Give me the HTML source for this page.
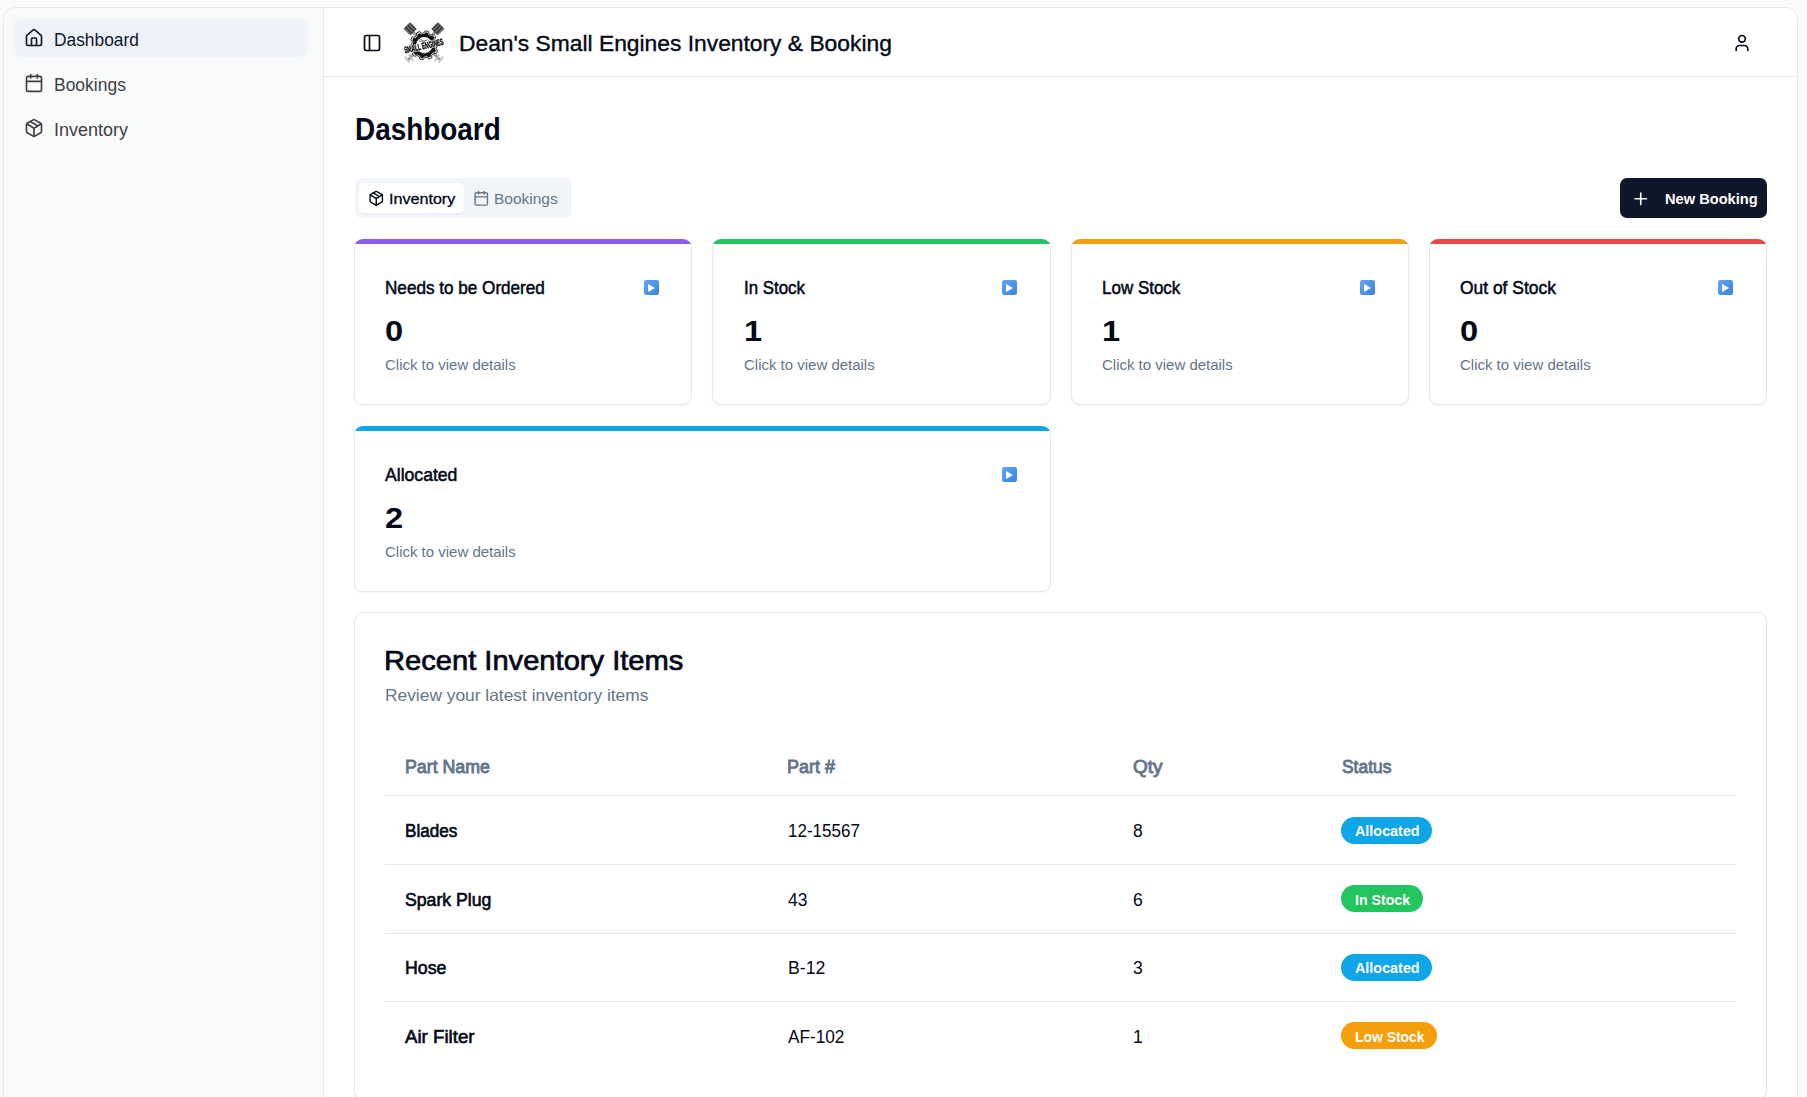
<!DOCTYPE html>
<html><head><meta charset="utf-8"><style>
*{box-sizing:border-box;margin:0;padding:0}
html,body{width:1807px;height:1097px;overflow:hidden;background:#fcf9f9;font-family:"Liberation Sans", sans-serif}
.app{position:absolute;left:3px;top:7px;width:1795px;height:1110px;border:1px solid #e9e7e7;border-radius:12px;background:#f9fafa;overflow:hidden}
.main{position:absolute;left:319px;top:-1px;width:1476px;height:1112px;background:#fff;border-left:1px solid #e8e8e8}
.hdr{position:absolute;left:0;top:0;width:100%;height:70px;border-bottom:1px solid #e5e7eb}
.t{position:absolute;white-space:pre;line-height:1;transform-origin:0 50%}
.ic{position:absolute}
.ic svg{width:100%;height:100%;display:block}
.active{position:absolute;left:15px;top:19px;width:292px;height:38px;border-radius:7px;background:#eef2f8;box-shadow:0 0 4px 2px rgba(238,242,248,0.6)}
.tabs{position:absolute;left:355px;top:178px;width:217px;height:40px;border-radius:7px;background:#f1f5f9}
.tab{position:absolute;left:359px;top:183px;width:105px;height:30px;border-radius:5px;background:#fff;box-shadow:0 1px 2px rgba(0,0,0,0.05)}
.btn{position:absolute;left:1620px;top:178px;width:147px;height:40px;border-radius:7px;background:#0f172a}
.card{position:absolute;background:#fff;border:1px solid #e5e7eb;border-radius:9px;box-shadow:0 1px 2px rgba(0,0,0,0.05)}
.card i{position:absolute;left:-1px;right:-1px;top:-1px;height:5px;display:block;overflow:hidden}
.card b{display:block;height:20px;border-radius:9px}
.tcard{position:absolute;left:354px;top:612px;width:1413px;height:488px;background:#fff;border:1px solid #e5e7eb;border-radius:9px;box-shadow:0 1px 2px rgba(0,0,0,0.05)}
.hl{position:absolute;left:385px;width:1351px;height:1px;background:#e5e7eb}
.badge{position:absolute;height:27px;border-radius:14px}
.play{position:absolute;width:15px;height:15px}
.play svg{display:block;width:15px;height:15px}
.logo{position:absolute;left:400px;top:20px;width:48px;height:46px}
.logo svg{display:block;width:100%;height:100%}
.logo{will-change:transform}
</style></head><body>
<div class="app"><div class="main"><div class="hdr"></div></div></div>
<div class="active"></div>
<div class="ic" style="left:24px;top:28.0px;width:20px;height:20px;color:#18181b"><svg viewBox="0 0 24 24" fill="none" stroke="currentColor" stroke-width="2" stroke-linecap="round" stroke-linejoin="round"><path d="M15 21v-8a1 1 0 0 0-1-1h-4a1 1 0 0 0-1 1v8"/><path d="M3 10a2 2 0 0 1 .709-1.528l7-5.999a2 2 0 0 1 2.582 0l7 5.999A2 2 0 0 1 21 10v9a2 2 0 0 1-2 2H5a2 2 0 0 1-2-2z"/></svg></div>
<div class="ic" style="left:24px;top:72.9px;width:20px;height:20px;color:#3f3f46"><svg viewBox="0 0 24 24" fill="none" stroke="currentColor" stroke-width="2" stroke-linecap="round" stroke-linejoin="round"><path d="M8 2v4"/><path d="M16 2v4"/><rect width="18" height="18" x="3" y="4" rx="2"/><path d="M3 10h18"/></svg></div>
<div class="ic" style="left:24px;top:118px;width:20px;height:20px;color:#3f3f46"><svg viewBox="0 0 24 24" fill="none" stroke="currentColor" stroke-width="2" stroke-linecap="round" stroke-linejoin="round"><path d="M11 21.73a2 2 0 0 0 2 0l7-4A2 2 0 0 0 21 16V8a2 2 0 0 0-1-1.73l-7-4a2 2 0 0 0-2 0l-7 4A2 2 0 0 0 3 8v8a2 2 0 0 0 1 1.73z"/><path d="M12 22V12"/><path d="m3.3 7 7.703 4.734a2 2 0 0 0 1.994 0L20.7 7"/><path d="m7.5 4.27 9 5.15"/></svg></div>
<div class="ic" style="left:362.3px;top:33px;width:20px;height:20px;color:#020817"><svg viewBox="0 0 24 24" fill="none" stroke="currentColor" stroke-width="2" stroke-linecap="round" stroke-linejoin="round"><rect width="18" height="18" x="3" y="3" rx="2"/><path d="M9 3v18"/></svg></div>
<div class="logo"><svg viewBox="400 20 48 46" width="48" height="46">
<defs><pattern id="stp" width="3" height="3" patternUnits="userSpaceOnUse"><rect width="3" height="1.9" fill="#2a2a2a"/><rect y="1.9" width="3" height="1.1" fill="#8a8a8a"/></pattern></defs>
<g stroke-linecap="round">
<line x1="410" y1="29" x2="439" y2="59" stroke="#9a9a9a" stroke-width="2.8"/>
<line x1="438" y1="29" x2="409" y2="59" stroke="#9a9a9a" stroke-width="2.8"/>
<path d="M405 57 l4 5 M409 55 l4 6" stroke="#bdbdbd" stroke-width="1.5"/>
<path d="M443 57 l-4 5 M439 55 l-4 6" stroke="#bdbdbd" stroke-width="1.5"/>
</g>
<g transform="rotate(45 410 29)"><rect x="405.5" y="24.5" width="9" height="8.5" rx="1" fill="url(#stp)" stroke="#333" stroke-width="0.8"/></g>
<g transform="rotate(-45 438 29)"><rect x="433.5" y="24.5" width="9" height="8.5" rx="1" fill="url(#stp)" stroke="#333" stroke-width="0.8"/></g>
<path d="M423.89 32.90 L425.30 30.74 L428.54 31.36 L429.05 33.89 L431.23 35.09 L433.65 34.17 L435.90 36.57 L434.83 38.92 L435.89 41.17 L438.39 41.85 L438.80 45.12 L436.55 46.39 L436.09 48.83 L437.71 50.84 L436.12 53.73 L433.55 53.44 L431.74 55.15 L431.87 57.72 L428.89 59.13 L426.98 57.38 L424.51 57.70 L423.10 59.86 L419.86 59.24 L419.35 56.71 L417.17 55.51 L414.75 56.43 L412.50 54.03 L413.57 51.68 L412.51 49.43 L410.01 48.75 L409.60 45.48 L411.85 44.21 L412.31 41.77 L410.69 39.76 L412.28 36.87 L414.85 37.16 L416.66 35.45 L416.53 32.88 L419.51 31.47 L421.42 33.22Z" fill="#d8d8d8" stroke="#2a2a2a" stroke-width="0.9" stroke-linejoin="round"/>
<path d="M424.20 34.30 L425.33 32.45 L427.88 32.94 L428.25 35.07 L430.67 36.40 L432.67 35.57 L434.44 37.46 L433.49 39.41 L434.66 41.90 L436.77 42.41 L437.10 44.98 L435.18 45.99 L434.66 48.70 L436.07 50.35 L434.82 52.62 L432.68 52.31 L430.67 54.20 L430.84 56.36 L428.49 57.46 L426.94 55.95 L424.20 56.30 L423.07 58.15 L420.52 57.66 L420.15 55.53 L417.73 54.20 L415.73 55.03 L413.96 53.14 L414.91 51.19 L413.74 48.70 L411.63 48.19 L411.30 45.62 L413.22 44.61 L413.74 41.90 L412.33 40.25 L413.58 37.98 L415.72 38.29 L417.73 36.40 L417.56 34.24 L419.91 33.14 L421.46 34.65Z" fill="#111"/>
<circle cx="424.2" cy="45.3" r="11.2" fill="#111"/>
<circle cx="424.2" cy="45.3" r="8.2" fill="#fff"/>
<text x="424.5" y="41.8" font-family="Liberation Serif" font-style="italic" font-weight="700" font-size="3.6" text-anchor="middle" fill="#333">Dean's</text>
<text x="424.2" y="52.6" font-family="Liberation Sans" font-size="2.4" text-anchor="middle" fill="#333" letter-spacing="1">EST</text>
<g transform="rotate(-12.5 424 47)"><text x="424" y="49" font-family="Liberation Sans" font-weight="700" font-size="9" text-anchor="middle" fill="#fff" stroke="#fff" stroke-width="1.6" stroke-linejoin="round" textLength="40" lengthAdjust="spacingAndGlyphs">SMALL ENGINES</text><text x="424" y="49" font-family="Liberation Sans" font-weight="700" font-size="9" text-anchor="middle" fill="#111" stroke="#111" stroke-width="0.45" textLength="40" lengthAdjust="spacingAndGlyphs">SMALL ENGINES</text></g>
</svg></div>
<div class="ic" style="left:1732.1px;top:33.05px;width:20px;height:20px;color:#020817"><svg viewBox="0 0 24 24" fill="none" stroke="currentColor" stroke-width="2" stroke-linecap="round" stroke-linejoin="round"><path d="M19 21v-2a4 4 0 0 0-4-4H9a4 4 0 0 0-4 4v2"/><circle cx="12" cy="7" r="4"/></svg></div>
<div class="tabs"></div><div class="tab"></div>
<div class="ic" style="left:368.2px;top:189.6px;width:16.5px;height:16.5px;color:#020817"><svg viewBox="0 0 24 24" fill="none" stroke="currentColor" stroke-width="2" stroke-linecap="round" stroke-linejoin="round"><path d="M11 21.73a2 2 0 0 0 2 0l7-4A2 2 0 0 0 21 16V8a2 2 0 0 0-1-1.73l-7-4a2 2 0 0 0-2 0l-7 4A2 2 0 0 0 3 8v8a2 2 0 0 0 1 1.73z"/><path d="M12 22V12"/><path d="m3.3 7 7.703 4.734a2 2 0 0 0 1.994 0L20.7 7"/><path d="m7.5 4.27 9 5.15"/></svg></div>
<div class="ic" style="left:473.2px;top:189.6px;width:16.5px;height:16.5px;color:#64748b"><svg viewBox="0 0 24 24" fill="none" stroke="currentColor" stroke-width="2" stroke-linecap="round" stroke-linejoin="round"><path d="M8 2v4"/><path d="M16 2v4"/><rect width="18" height="18" x="3" y="4" rx="2"/><path d="M3 10h18"/></svg></div>
<div class="btn"></div>
<div class="ic" style="left:1630.5px;top:189px;width:19.5px;height:19.5px;color:#ffffff"><svg viewBox="0 0 24 24" fill="none" stroke="currentColor" stroke-width="2" stroke-linecap="round" stroke-linejoin="round"><path d="M5 12h14"/><path d="M12 5v14"/></svg></div>
<div class="card" style="left:354px;top:239px;width:338px;height:166px"><i><b style="background:#8b5cf6"></b></i></div>
<div class="card" style="left:712px;top:239px;width:339px;height:166px"><i><b style="background:#22c55e"></b></i></div>
<div class="card" style="left:1071px;top:239px;width:338px;height:166px"><i><b style="background:#f59e0b"></b></i></div>
<div class="card" style="left:1429px;top:239px;width:338px;height:166px"><i><b style="background:#ef4444"></b></i></div>
<div class="card" style="left:354px;top:426px;width:697px;height:166px"><i><b style="background:#0ea5e9"></b></i></div>
<div class="play" style="left:644px;top:280px"><svg viewBox="0 0 15 15"><defs><linearGradient id="pg" x1="0" y1="0" x2="1" y2="1"><stop offset="0" stop-color="#5fa8f5"/><stop offset="1" stop-color="#3b82e0"/></linearGradient></defs><rect x="0" y="0" width="15" height="15" rx="2.2" fill="url(#pg)"/><path d="M4 3.9 L11 8 L4 12.1 Z" fill="#fff"/></svg></div>
<div class="play" style="left:1002px;top:280px"><svg viewBox="0 0 15 15"><defs><linearGradient id="pg" x1="0" y1="0" x2="1" y2="1"><stop offset="0" stop-color="#5fa8f5"/><stop offset="1" stop-color="#3b82e0"/></linearGradient></defs><rect x="0" y="0" width="15" height="15" rx="2.2" fill="url(#pg)"/><path d="M4 3.9 L11 8 L4 12.1 Z" fill="#fff"/></svg></div>
<div class="play" style="left:1360px;top:280px"><svg viewBox="0 0 15 15"><defs><linearGradient id="pg" x1="0" y1="0" x2="1" y2="1"><stop offset="0" stop-color="#5fa8f5"/><stop offset="1" stop-color="#3b82e0"/></linearGradient></defs><rect x="0" y="0" width="15" height="15" rx="2.2" fill="url(#pg)"/><path d="M4 3.9 L11 8 L4 12.1 Z" fill="#fff"/></svg></div>
<div class="play" style="left:1718px;top:280px"><svg viewBox="0 0 15 15"><defs><linearGradient id="pg" x1="0" y1="0" x2="1" y2="1"><stop offset="0" stop-color="#5fa8f5"/><stop offset="1" stop-color="#3b82e0"/></linearGradient></defs><rect x="0" y="0" width="15" height="15" rx="2.2" fill="url(#pg)"/><path d="M4 3.9 L11 8 L4 12.1 Z" fill="#fff"/></svg></div>
<div class="play" style="left:1002px;top:467px"><svg viewBox="0 0 15 15"><defs><linearGradient id="pg" x1="0" y1="0" x2="1" y2="1"><stop offset="0" stop-color="#5fa8f5"/><stop offset="1" stop-color="#3b82e0"/></linearGradient></defs><rect x="0" y="0" width="15" height="15" rx="2.2" fill="url(#pg)"/><path d="M4 3.9 L11 8 L4 12.1 Z" fill="#fff"/></svg></div>
<div class="tcard"></div>
<div class="hl" style="top:795px"></div><div class="hl" style="top:864px"></div><div class="hl" style="top:933px"></div><div class="hl" style="top:1001px"></div>
<div class="badge" style="left:1341px;top:817.00px;width:91px;background:#0ea5e9"></div><div class="t" style="left:1354.70px;top:823.20px;font-size:15px;font-weight:700;color:#fff;transform:scaleX(0.9575)">Allocated</div><div class="badge" style="left:1341px;top:885.00px;width:82px;background:#22c55e"></div><div class="t" style="left:1354.70px;top:891.70px;font-size:15px;font-weight:700;color:#fff;transform:scaleX(0.9447)">In Stock</div><div class="badge" style="left:1341px;top:954.00px;width:91px;background:#0ea5e9"></div><div class="t" style="left:1354.70px;top:960.40px;font-size:15px;font-weight:700;color:#fff;transform:scaleX(0.9575)">Allocated</div><div class="badge" style="left:1341px;top:1022.00px;width:96px;background:#f59e0b"></div><div class="t" style="left:1354.70px;top:1028.80px;font-size:15px;font-weight:700;color:#fff;transform:scaleX(0.9280)">Low Stock</div>
<div class="t" style="left:54.42px;top:30.56px;font-size:18px;font-weight:400;color:#0f172a;transform:scaleX(0.9640);">Dashboard</div><div class="t" style="left:54.42px;top:75.76px;font-size:18px;font-weight:400;color:#3f3f46;transform:scaleX(0.9708);">Bookings</div><div class="t" style="left:54.42px;top:120.76px;font-size:18px;font-weight:400;color:#3f3f46;transform:scaleX(0.9985);">Inventory</div><div class="t" style="left:458.70px;top:32.72px;font-size:21.6px;font-weight:400;color:#020817;transform:scaleX(1.0561);-webkit-text-stroke:0.35px #020817;">Dean's Small Engines Inventory &amp; Booking</div><div class="t" style="left:354.64px;top:113.76px;font-size:31px;font-weight:700;color:#020817;transform:scaleX(0.9000);">Dashboard</div><div class="t" style="left:388.57px;top:190.68px;font-size:15.5px;font-weight:400;color:#020817;transform:scaleX(1.0396);-webkit-text-stroke:0.3px #020817;">Inventory</div><div class="t" style="left:494.07px;top:190.68px;font-size:15.5px;font-weight:400;color:#64748b;transform:scaleX(0.9996);">Bookings</div><div class="t" style="left:1664.57px;top:190.88px;font-size:15.5px;font-weight:700;color:#ffffff;transform:scaleX(0.9440);">New Booking</div><div class="t" style="left:385.16px;top:277.92px;font-size:19px;font-weight:400;color:#020817;transform:scaleX(0.9009);-webkit-text-stroke:0.55px #020817;">Needs to be Ordered</div><div class="t" style="left:385.48px;top:315.17px;font-size:30.4px;font-weight:700;color:#020817;transform:scaleX(1.0709);">0</div><div class="t" style="left:384.60px;top:357.10px;font-size:15px;font-weight:400;color:#64748b;transform:scaleX(0.9985);">Click to view details</div><div class="t" style="left:744.16px;top:277.92px;font-size:19px;font-weight:400;color:#020817;transform:scaleX(0.8863);-webkit-text-stroke:0.55px #020817;">In Stock</div><div class="t" style="left:744.48px;top:315.17px;font-size:30.4px;font-weight:700;color:#020817;transform:scaleX(1.0709);">1</div><div class="t" style="left:743.60px;top:357.10px;font-size:15px;font-weight:400;color:#64748b;transform:scaleX(0.9985);">Click to view details</div><div class="t" style="left:1102.16px;top:277.92px;font-size:19px;font-weight:400;color:#020817;transform:scaleX(0.8939);-webkit-text-stroke:0.55px #020817;">Low Stock</div><div class="t" style="left:1102.48px;top:315.17px;font-size:30.4px;font-weight:700;color:#020817;transform:scaleX(1.0709);">1</div><div class="t" style="left:1101.60px;top:357.10px;font-size:15px;font-weight:400;color:#64748b;transform:scaleX(0.9985);">Click to view details</div><div class="t" style="left:1460.16px;top:277.92px;font-size:19px;font-weight:400;color:#020817;transform:scaleX(0.9172);-webkit-text-stroke:0.55px #020817;">Out of Stock</div><div class="t" style="left:1460.48px;top:315.17px;font-size:30.4px;font-weight:700;color:#020817;transform:scaleX(1.0709);">0</div><div class="t" style="left:1459.60px;top:357.10px;font-size:15px;font-weight:400;color:#64748b;transform:scaleX(0.9985);">Click to view details</div><div class="t" style="left:385.16px;top:464.92px;font-size:19px;font-weight:400;color:#020817;transform:scaleX(0.9263);-webkit-text-stroke:0.55px #020817;">Allocated</div><div class="t" style="left:385.48px;top:502.17px;font-size:30.4px;font-weight:700;color:#020817;transform:scaleX(1.0709);">2</div><div class="t" style="left:384.60px;top:544.10px;font-size:15px;font-weight:400;color:#64748b;transform:scaleX(0.9985);">Click to view details</div><div class="t" style="left:384.32px;top:646.60px;font-size:28px;font-weight:400;color:#020817;transform:scaleX(1.0397);-webkit-text-stroke:0.7px #020817;">Recent Inventory Items</div><div class="t" style="left:385.01px;top:686.53px;font-size:16.5px;font-weight:400;color:#64748b;transform:scaleX(1.0520);">Review your latest inventory items</div><div class="t" style="left:405.25px;top:758.79px;font-size:17.5px;font-weight:400;color:#64748b;transform:scaleX(1.0153);-webkit-text-stroke:0.85px #64748b;">Part Name</div><div class="t" style="left:787.45px;top:758.79px;font-size:17.5px;font-weight:400;color:#64748b;transform:scaleX(1.0264);-webkit-text-stroke:0.85px #64748b;">Part #</div><div class="t" style="left:1132.75px;top:758.79px;font-size:17.5px;font-weight:400;color:#64748b;transform:scaleX(1.0838);-webkit-text-stroke:0.85px #64748b;">Qty</div><div class="t" style="left:1341.75px;top:758.79px;font-size:17.5px;font-weight:400;color:#64748b;transform:scaleX(0.9953);-webkit-text-stroke:0.85px #64748b;">Status</div><div class="t" style="left:404.95px;top:822.59px;font-size:17.5px;font-weight:400;color:#020817;transform:scaleX(0.9786);-webkit-text-stroke:0.6px #020817;">Blades</div><div class="t" style="left:787.95px;top:822.59px;font-size:17.5px;font-weight:400;color:#020817;transform:scaleX(0.9715);">12-15567</div><div class="t" style="left:1132.95px;top:822.59px;font-size:17.5px;font-weight:400;color:#020817;">8</div><div class="t" style="left:404.95px;top:891.59px;font-size:17.5px;font-weight:400;color:#020817;transform:scaleX(1.0094);-webkit-text-stroke:0.6px #020817;">Spark Plug</div><div class="t" style="left:787.95px;top:891.59px;font-size:17.5px;font-weight:400;color:#020817;transform:scaleX(0.9962);">43</div><div class="t" style="left:1132.95px;top:891.59px;font-size:17.5px;font-weight:400;color:#020817;">6</div><div class="t" style="left:404.95px;top:959.79px;font-size:17.5px;font-weight:400;color:#020817;transform:scaleX(1.0137);-webkit-text-stroke:0.6px #020817;">Hose</div><div class="t" style="left:787.95px;top:959.79px;font-size:17.5px;font-weight:400;color:#020817;transform:scaleX(1.0121);">B-12</div><div class="t" style="left:1132.95px;top:959.79px;font-size:17.5px;font-weight:400;color:#020817;">3</div><div class="t" style="left:404.95px;top:1028.79px;font-size:17.5px;font-weight:400;color:#020817;transform:scaleX(1.0668);-webkit-text-stroke:0.6px #020817;">Air Filter</div><div class="t" style="left:787.95px;top:1028.79px;font-size:17.5px;font-weight:400;color:#020817;transform:scaleX(0.9823);">AF-102</div><div class="t" style="left:1132.95px;top:1028.79px;font-size:17.5px;font-weight:400;color:#020817;">1</div>
</body></html>
